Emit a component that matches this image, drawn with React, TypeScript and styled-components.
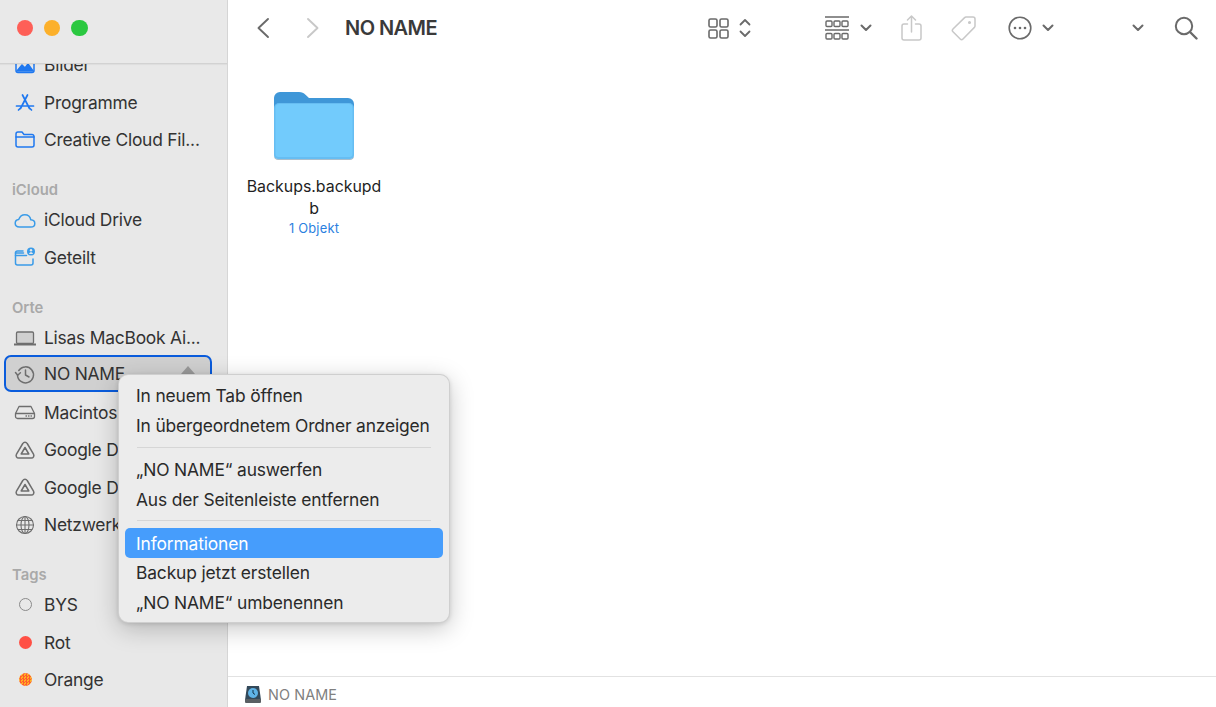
import styled, { createGlobalStyle } from 'styled-components';
import type { ReactNode } from 'react';

const GlobalStyle = createGlobalStyle`
  html, body {
    margin: 0;
    padding: 0;
    height: 100%;
    overflow: hidden;
    background: #fff;
  }
  #root { height: 100%; }
  * { box-sizing: border-box; }
`;

const Window = styled.div`
  width: 1216px;
  height: 707px;
  display: flex;
  position: relative;
  overflow: hidden;
  font-family: Inter, "Noto Sans", "Liberation Sans", sans-serif;
  color: #2b2b2b;
`;

const Sidebar = styled.aside`
  width: 228px;
  height: 100%;
  flex-shrink: 0;
  display: flex;
  flex-direction: column;
  background: #e8e8e8;
  border-right: 1px solid #d6d6d6;
`;

const TitleBar = styled.div`
  height: 64px;
  flex-shrink: 0;
  display: flex;
  gap: 10.7px;
  padding: 20px 0 0 17px;
  background: #e9e9e9;
  border-bottom: 1px solid #d2d2d2;
  box-shadow: 0 1px 1px rgba(0, 0, 0, 0.04);
  position: relative;
  z-index: 1;
`;

const Light = styled.span<{ $color: string }>`
  width: 16.4px;
  height: 16.4px;
  border-radius: 50%;
  background: ${p => p.$color};
`;

const SideScroll = styled.div`
  flex: 1;
  min-height: 0;
  overflow: hidden;
  padding: 0 15px 0 5px;
`;

const SideInner = styled.div`
  margin-top: -18px;
`;

const SectionTitle = styled.div`
  height: 30px;
  margin-top: 13px;
  padding: 11px 0 0 7px;
  font-size: 14.8px;
  line-height: 16px;
  font-weight: 600;
  color: #a9a9a9;
`;

const Row = styled.div<{ $selected?: boolean }>`
  height: 37.4px;
  display: flex;
  align-items: center;
  padding-left: 9px;
  font-size: 17.4px;
  letter-spacing: -0.22px;
  white-space: nowrap;
  color: #333;
  position: relative;
  ${p =>
    p.$selected &&
    `
    background: #d0d0d0;
    border: 2px solid #0a5cdc;
    border-radius: 7px;
    height: 37px;
    margin: -1px 0 1.4px -1px;
    padding-left: 8px;
  `}
`;

const RowIcon = styled.span`
  width: 22px;
  height: 22px;
  margin-right: 8px;
  flex-shrink: 0;
  display: flex;
  align-items: center;
  justify-content: center;
`;

const TagDot = styled.span<{ $kind: 'none' | 'red' | 'orange' }>`
  width: 13px;
  height: 13px;
  border-radius: 50%;
  ${p => p.$kind === 'none' && 'border: 1.5px solid #8a8a8a;'}
  ${p => p.$kind === 'red' && 'background: #ff5045;'}
  ${p =>
    p.$kind === 'orange' &&
    'background: repeating-conic-gradient(#ff5a30 0 25%, #ffb020 0 50%) 0 0 / 3px 3px;'}
`;

const EjectMark = styled.span`
  position: absolute;
  right: 15px;
  top: 9px;
  width: 0;
  height: 0;
  border-left: 7px solid transparent;
  border-right: 7px solid transparent;
  border-bottom: 8px solid #9a9a9a;
`;

const Main = styled.main`
  flex: 1;
  min-width: 0;
  display: flex;
  flex-direction: column;
`;

const Toolbar = styled.header`
  height: 56px;
  flex-shrink: 0;
  display: flex;
  align-items: center;
  padding-left: 28px;
`;

const ToolIcon = styled.span<{ $left: number; $faded?: boolean }>`
  display: flex;
  margin-left: ${p => p.$left}px;
  color: ${p => (p.$faded ? '#c8c8c8' : '#6a6a6a')};
`;

const WindowTitle = styled.h1`
  margin: 0 0 0 25px;
  font-size: 20px;
  line-height: 24px;
  font-weight: 600;
  letter-spacing: -0.55px;
  color: #3a3a3a;
  white-space: nowrap;
`;

const Content = styled.section`
  flex: 1;
  min-height: 0;
  padding: 36px 0 0 18px;
`;

const FileItem = styled.div`
  width: 136px;
  display: flex;
  flex-direction: column;
  align-items: center;
`;

const FileName = styled.div`
  width: 136px;
  margin-top: 16px;
  text-align: center;
  word-break: break-all;
  font-size: 15.9px;
  line-height: 21.5px;
  color: #1f1f1f;
`;

const FileMeta = styled.div`
  margin-top: 1px;
  font-size: 12.9px;
  line-height: 17px;
  letter-spacing: 0.2px;
  color: #2b7fe0;
`;

const StatusBar = styled.footer`
  height: 31px;
  flex-shrink: 0;
  display: flex;
  align-items: center;
  gap: 6px;
  padding: 4px 0 0 16px;
  border-top: 1px solid #e2e2e2;
  font-size: 14.4px;
  letter-spacing: 0.1px;
  color: #808080;
`;

const Menu = styled.div`
  position: absolute;
  left: 118px;
  top: 374px;
  width: 332px;
  height: 249px;
  padding: 6px;
  background: #ececec;
  border-radius: 10px;
  border: 1px solid rgba(0, 0, 0, 0.12);
  box-shadow: 0 6px 24px rgba(0, 0, 0, 0.22), 0 1px 4px rgba(0, 0, 0, 0.12);
  z-index: 5;
`;

const MenuItem = styled.div<{ $active?: boolean }>`
  height: 29.6px;
  display: flex;
  align-items: center;
  padding-left: 11px;
  border-radius: 5px;
  font-size: 17.4px;
  letter-spacing: -0.14px;
  white-space: nowrap;
  color: ${p => (p.$active ? '#fff' : '#2a2a2a')};
  background: ${p => (p.$active ? '#469dfc' : 'transparent')};
`;

const MenuRule = styled.div`
  height: 1px;
  margin: 6.5px 12px 7px 12px;
  background: #d6d6d6;
`;

const Glyph = ({ children, size = 22, color, stroke = 1.5 }: { children: ReactNode; size?: number; color: string; stroke?: number }) => (
  <svg
    width={size}
    height={size}
    viewBox="0 0 22 22"
    fill="none"
    stroke={color}
    strokeWidth={stroke}
    strokeLinecap="round"
    strokeLinejoin="round"
  >
    {children}
  </svg>
);

const BLUE = '#1f78f0';
const CLOUD = '#3a9be8';
const GREY = '#6e6e6e';

const PicturesIcon = () => (
  <Glyph color={BLUE}>
    <rect x="2" y="3.5" width="18" height="15" rx="2" />
    <path d="M3 17l5-6 3 3 3-4 5 7z" fill={BLUE} />
  </Glyph>
);

const AppsIcon = () => (
  <Glyph color={BLUE} stroke={1.7}>
    <path d="M8.500 4L15.500 17.500M13.500 4L6.500 17.500M2.500 15h17M4.500 19L6 17.500M17.500 19L16 17.500" />
  </Glyph>
);

const FolderIcon = () => (
  <Glyph color={BLUE}>
    <path d="M2 6a2 2 0 012-2h4l2 2.4h8a2 2 0 012 2V17a2 2 0 01-2 2H4a2 2 0 01-2-2z" />
    <path d="M2 9h18" />
  </Glyph>
);

const CloudIcon = () => (
  <Glyph color={CLOUD}>
    <path d="M5.500 18C3 18 1.200 16.400 1.200 14.300c0-2 1.500-3.500 3.500-3.700C5.800 7.700 8 5.800 10.800 5.800c3.200 0 5.500 2.200 6 5 2.300.2 4 1.600 4 3.600 0 2.100-1.700 3.600-4 3.600z" />
  </Glyph>
);

const SharedIcon = () => (
  <Glyph color={CLOUD}>
    <path d="M9 5H3.500a2 2 0 00-2 2v10a2 2 0 002 2H17a2 2 0 002-2v-4" />
    <path d="M1.500 9.500h11M1.500 7h8" />
    <circle cx="17" cy="5.500" r="4" fill={CLOUD} stroke="none" />
    <circle cx="17" cy="4.300" r="1.200" fill="#e8e8e8" stroke="none" />
    <path d="M15 8c.3-1.200 1-1.700 2-1.700s1.700.5 2 1.700z" fill="#e8e8e8" stroke="none" />
  </Glyph>
);

const LaptopIcon = () => (
  <Glyph color={GREY} stroke={1.3}>
    <rect x="2.500" y="5" width="17" height="11.500" rx="1.200" fill="#d0d0d0" />
    <path d="M0 17.500h22" strokeWidth="1.800" />
  </Glyph>
);

const HistoryIcon = () => (
  <Glyph color={GREY} stroke={1.5}>
    <path d="M4.800 7.500A8 8 0 113.500 12" />
    <path d="M1.500 9.500l2.200 2.700 2.700-2.400M11.500 7v5l3.500 2" />
  </Glyph>
);

const DriveIcon = () => (
  <Glyph color={GREY} stroke={1.3}>
    <path d="M1.500 12.500L5 5.500h12l3.500 7v3a2 2 0 01-2 2h-15a2 2 0 01-2-2z" />
    <path d="M2 12.500h18" />
    <path d="M12 15h.5M14.500 15h.5M17 15h.5" />
  </Glyph>
);

const GoogleIcon = () => (
  <Glyph color={GREY} stroke={1.5}>
    <path d="M8.800 4.500a2.500 2.500 0 014.400 0l6.300 10.700a2.500 2.500 0 01-2.200 3.800H4.700a2.500 2.500 0 01-2.200-3.800z" />
    <path d="M11 8.500l3.800 6.500H7.200z" />
  </Glyph>
);

const GlobeIcon = () => (
  <Glyph color={GREY} stroke={1.1}>
    <circle cx="11" cy="11" r="8.500" />
    <ellipse cx="11" cy="11" rx="4" ry="8.500" />
    <path d="M11 2.500v17M2.500 11h17M4 6.500h14M4 15.500h14" />
  </Glyph>
);

const BackIcon = () => (
  <svg width="14" height="22" viewBox="0 0 14 22" fill="none" stroke="currentColor" strokeWidth="1.9" strokeLinecap="round" strokeLinejoin="round">
    <path d="M12 2L2.500 11l9.500 9" />
  </svg>
);

const ForwardIcon = () => (
  <svg width="14" height="22" viewBox="0 0 14 22" fill="none" stroke="currentColor" strokeWidth="1.9" strokeLinecap="round" strokeLinejoin="round">
    <path d="M2 2l9.500 9L2 20" />
  </svg>
);

const GridIcon = () => (
  <svg width="21" height="21" viewBox="0 0 21 21" fill="none" stroke="currentColor" strokeWidth="1.600">
    <rect x="1" y="1" width="8" height="8" rx="1.600" />
    <rect x="12" y="1" width="8" height="8" rx="1.600" />
    <rect x="1" y="12" width="8" height="8" rx="1.600" />
    <rect x="12" y="12" width="8" height="8" rx="1.600" />
  </svg>
);

const UpDownIcon = () => (
  <svg width="12" height="20" viewBox="0 0 12 20" fill="none" stroke="currentColor" strokeWidth="1.800" strokeLinecap="round" strokeLinejoin="round">
    <path d="M1.500 6.500L6 2l4.500 4.500M1.500 13.500L6 18l4.500-4.500" />
  </svg>
);

const GroupIcon = () => (
  <svg width="24" height="24" viewBox="0 0 24 24" fill="none" stroke="currentColor" strokeWidth="1.400">
    <path d="M0 1h24M0 14h24" strokeWidth="1.500" />
    <rect x="1" y="5" width="6" height="5.500" rx="1" />
    <rect x="9" y="5" width="6" height="5.500" rx="1" />
    <rect x="17" y="5" width="6" height="5.500" rx="1" />
    <rect x="1" y="17.500" width="6" height="5.500" rx="1" />
    <rect x="9" y="17.500" width="6" height="5.500" rx="1" />
    <rect x="17" y="17.500" width="6" height="5.500" rx="1" />
  </svg>
);

const ChevronIcon = () => (
  <svg width="12" height="8" viewBox="0 0 12 8" fill="none" stroke="currentColor" strokeWidth="2" strokeLinecap="round" strokeLinejoin="round">
    <path d="M1.500 1.500L6 6l4.500-4.500" />
  </svg>
);

const ShareIcon = () => (
  <svg width="21" height="26" viewBox="0 0 21 26" fill="none" stroke="currentColor" strokeWidth="1.500" strokeLinecap="round" strokeLinejoin="round">
    <path d="M6.500 9H3a2 2 0 00-2 2v12a2 2 0 002 2h15a2 2 0 002-2V11a2 2 0 00-2-2h-3.500" />
    <path d="M10.500 17V1M6.500 5l4-4 4 4" />
  </svg>
);

const TagIcon = () => (
  <svg width="26" height="26" viewBox="0 0 26 26" fill="none" stroke="currentColor" strokeWidth="1.500" strokeLinecap="round" strokeLinejoin="round">
    <path d="M15 2h7a2 2 0 012 2v7a2 2 0 01-.6 1.400L12 24a2 2 0 01-2.800 0L2 16.800A2 2 0 012 14L13.600 2.600A2 2 0 0115 2z" />
    <circle cx="18.500" cy="7.500" r="0.800" fill="currentColor" />
  </svg>
);

const MoreIcon = () => (
  <svg width="24" height="24" viewBox="0 0 24 24" fill="none" stroke="currentColor" strokeWidth="1.600">
    <circle cx="12" cy="12" r="10.800" />
    <circle cx="7" cy="12" r="1.300" fill="currentColor" stroke="none" />
    <circle cx="12" cy="12" r="1.300" fill="currentColor" stroke="none" />
    <circle cx="17" cy="12" r="1.300" fill="currentColor" stroke="none" />
  </svg>
);

const SearchIcon = () => (
  <svg width="24" height="24" viewBox="0 0 24 24" fill="none" stroke="currentColor" strokeWidth="2" strokeLinecap="round">
    <circle cx="10" cy="10" r="8.200" />
    <path d="M16 16l6.500 6.500" strokeWidth="2.400" />
  </svg>
);

const BigFolder = () => (
  <svg width="82" height="68" viewBox="0 0 82 68">
    <path d="M1 6a6 6 0 016-6h19c3 0 4.500 1 6.500 2.800L36 6h39a6 6 0 016 6v40H1z" fill="#3f97d8" />
    <path d="M1 16a5 5 0 015-5h70a5 5 0 015 5v47a4 4 0 01-4 4H5a4 4 0 01-4-4z" fill="#66bdf2" />
    <path d="M2.500 16a4 4 0 014-4h69a4 4 0 014 4v46a3 3 0 01-3 3H5.500a3 3 0 01-3-3z" fill="#72cbfc" />
    <path d="M1 63a4 4 0 004 4h72a4 4 0 004-4v.8a4 4 0 01-4 4H5a4 4 0 01-4-4z" fill="#8fa9bb" />
  </svg>
);

const VolumeIcon = () => (
  <svg width="18" height="19" viewBox="0 0 18 19">
    <path d="M3 1h12l2 14H1z" fill="#33495a" />
    <rect x="1" y="14" width="16" height="4" rx="1" fill="#5a5f63" />
    <circle cx="9" cy="8" r="5" fill="#5fb3e6" />
    <path d="M9 5v3l2 1.500" fill="none" stroke="#10324a" strokeWidth="1" />
  </svg>
);

export default function App() {
  return (
    <Window>
      <GlobalStyle />
      <Sidebar>
        <TitleBar>
          <Light $color="#fe5f57" />
          <Light $color="#fcb02b" />
          <Light $color="#2bc840" />
        </TitleBar>
        <SideScroll>
          <SideInner>
            <Row><RowIcon><PicturesIcon /></RowIcon>Bilder</Row>
            <Row><RowIcon><AppsIcon /></RowIcon>Programme</Row>
            <Row><RowIcon><FolderIcon /></RowIcon>Creative Cloud Fil...</Row>

            <SectionTitle>iCloud</SectionTitle>
            <Row><RowIcon><CloudIcon /></RowIcon>iCloud Drive</Row>
            <Row><RowIcon><SharedIcon /></RowIcon>Geteilt</Row>

            <SectionTitle>Orte</SectionTitle>
            <Row><RowIcon><LaptopIcon /></RowIcon>Lisas MacBook Ai...</Row>
            <Row $selected><RowIcon><HistoryIcon /></RowIcon>NO NAME<EjectMark /></Row>
            <Row><RowIcon><DriveIcon /></RowIcon>Macintosh HD</Row>
            <Row><RowIcon><GoogleIcon /></RowIcon>Google Drive</Row>
            <Row><RowIcon><GoogleIcon /></RowIcon>Google Drive</Row>
            <Row><RowIcon><GlobeIcon /></RowIcon>Netzwerk</Row>

            <SectionTitle>Tags</SectionTitle>
            <Row><RowIcon><TagDot $kind="none" /></RowIcon>BYS</Row>
            <Row><RowIcon><TagDot $kind="red" /></RowIcon>Rot</Row>
            <Row><RowIcon><TagDot $kind="orange" /></RowIcon>Orange</Row>
          </SideInner>
        </SideScroll>
      </Sidebar>

      <Main>
        <Toolbar>
          <ToolIcon $left={0}><BackIcon /></ToolIcon>
          <ToolIcon $left={36} $faded><ForwardIcon /></ToolIcon>
          <WindowTitle>NO NAME</WindowTitle>
          <ToolIcon $left={271}><GridIcon /></ToolIcon>
          <ToolIcon $left={10}><UpDownIcon /></ToolIcon>
          <ToolIcon $left={74}><GroupIcon /></ToolIcon>
          <ToolIcon $left={11}><ChevronIcon /></ToolIcon>
          <ToolIcon $left={29} $faded><ShareIcon /></ToolIcon>
          <ToolIcon $left={29} $faded><TagIcon /></ToolIcon>
          <ToolIcon $left={31}><MoreIcon /></ToolIcon>
          <ToolIcon $left={10}><ChevronIcon /></ToolIcon>
          <ToolIcon $left={78}><ChevronIcon /></ToolIcon>
          <ToolIcon $left={30}><SearchIcon /></ToolIcon>
        </Toolbar>
        <Content>
          <FileItem>
            <BigFolder />
            <FileName>Backups.backupdb</FileName>
            <FileMeta>1 Objekt</FileMeta>
          </FileItem>
        </Content>
        <StatusBar>
          <VolumeIcon />
          NO NAME
        </StatusBar>
      </Main>

      <Menu>
        <MenuItem>In neuem Tab öffnen</MenuItem>
        <MenuItem>In übergeordnetem Ordner anzeigen</MenuItem>
        <MenuRule />
        <MenuItem>„NO NAME“ auswerfen</MenuItem>
        <MenuItem>Aus der Seitenleiste entfernen</MenuItem>
        <MenuRule />
        <MenuItem $active>Informationen</MenuItem>
        <MenuItem>Backup jetzt erstellen</MenuItem>
        <MenuItem>„NO NAME“ umbenennen</MenuItem>
      </Menu>
    </Window>
  );
}
